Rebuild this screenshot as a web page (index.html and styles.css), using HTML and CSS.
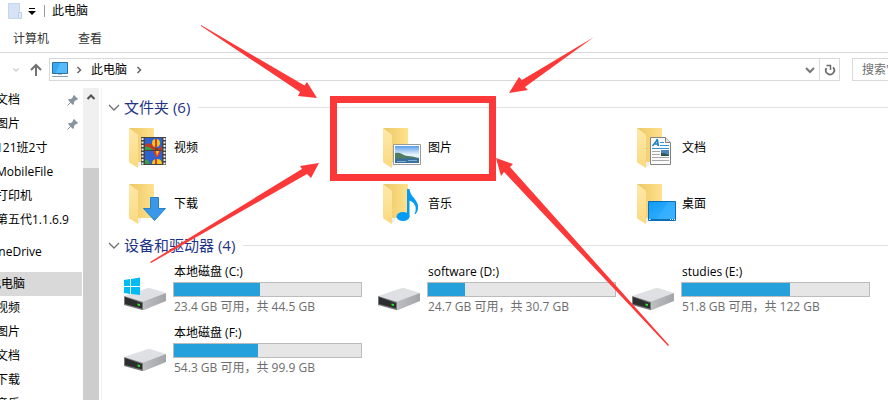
FILE: index.html
```html
<!DOCTYPE html>
<html lang="zh-CN">

<head>
    <meta charset="UTF-8">
    <meta name="viewport" content="width=device-width, initial-scale=1.0">
    <title>此电脑</title>
    <link rel="stylesheet" href="styles.css">
</head>

<body>
    <svg class="defs" aria-hidden="true">
        <defs>
            <linearGradient id="back" x1="0" y1="0" x2="1" y2="0">
                <stop offset="0" stop-color="#ecc766"/>
                <stop offset="1" stop-color="#ffe28c"/>
            </linearGradient>
            <linearGradient id="flap" x1="0" y1="0" x2="0" y2="1">
                <stop offset="0" stop-color="#ffe9a9"/>
                <stop offset="1" stop-color="#fad97f"/>
            </linearGradient>
            <linearGradient id="blue" x1="0" y1="0" x2="1" y2="1">
                <stop offset="0" stop-color="#0f9bfa"/>
                <stop offset="1" stop-color="#3fb4ff"/>
            </linearGradient>
            <linearGradient id="sky" x1="0" y1="0" x2="0" y2="1">
                <stop offset="0" stop-color="#5a9bea"/>
                <stop offset=".5" stop-color="#e6f3fc"/>
            </linearGradient>
            <linearGradient id="side" x1="0" y1="0" x2="1" y2="0">
                <stop offset="0" stop-color="#bfc0c3"/>
                <stop offset="1" stop-color="#a3a4a7"/>
            </linearGradient>
        </defs>
        <symbol id="folder" viewBox="0 0 40 42">
            <path d="M8 42l4-3V36H8z" fill="#eee"/>
            <path d="M0 2h25v34H6L0 32z" fill="url(#back)"/>
            <path d="M0 2l8 6q1 .5 1 2v32L1 37q-1-.6-1-2z" fill="url(#flap)"/>
        </symbol>
        <symbol id="drive" viewBox="0 0 42 33">
            <path d="M0 19l24-8q1-.3 2 0l16 5-23 10z" fill="#dfe0e4"/>
            <path d="M18 25l24-9v8L20 33h-2z" fill="url(#side)"/>
            <path d="M0 19l19 6v8h-1L0 28z" fill="#77797c"/>
            <path d="M1 20l17 6v5.500L1 27z" fill="#2b2d2f"/>
            <path d="M13.500 26.500l2.500.5v2l-2.500-.5z" fill="#2ee52e"/>
        </symbol>
        <symbol id="pin" viewBox="0 0 12 12">
            <path d="M7 1l4 4-1 1H9L7 8v2L6 11 1 6l1-1h2l2-2V2z" fill="#8795a1"/>
            <path d="M4 8l-3.500 3.500" stroke="#8795a1"/>
        </symbol>
        <symbol id="chevron" viewBox="0 0 12 12">
            <path d="M1 4l5 5 5-5" fill="none" stroke="#717171" stroke-width="1.300"/>
        </symbol>
    </svg>

    <header>
        <div class="titlebar">
            <svg class="doc" viewBox="0 0 14 18">
                <path d="M.5 1.500h11v15H.5z" fill="#d5e3f4" stroke="#c6d7ec"/>
                <path d="M10.500 10.500h3v6h-3z" fill="#e2ecf8" stroke="#bccfe8"/>
            </svg>
            <button class="quick" aria-label="自定义快速访问工具栏">
                <svg viewBox="0 0 8 8"><path d="M1 1.500h6" stroke="#000"/><path d="M0 4h8L4 8z"/></svg>
            </button>
            <span class="sep"></span>
            <span>此电脑</span>
        </div>
        <nav class="tabs">
            <a href="#">计算机</a>
            <a href="#">查看</a>
        </nav>
    </header>

    <div class="navbar">
        <button class="recent" aria-label="最近浏览的位置">
            <svg viewBox="0 0 8 8"><path d="M1.500 2.500L4 5l2.500-2.500" fill="none" stroke="#d0d0d0" stroke-width="1.500"/></svg>
        </button>
        <button class="up" aria-label="上移">
            <svg viewBox="0 0 12 14"><path d="M6 13V2M1 7l5-5 5 5" fill="none" stroke="#727272" stroke-width="2"/></svg>
        </button>
        <div class="address">
            <svg class="pc" viewBox="0 0 18 16">
                <path d="M1.500.5h15v11h-15z" fill="#35a9f5" stroke="#2c6f9e"/>
                <path d="M9 1h7v10H5z" fill="#55bbfb"/>
                <path d="M7 12h4v1H7z" fill="#b4c7d3"/>
                <path d="M1 14.500h16" stroke="#8aa2b3"/>
            </svg>
            <svg class="next" viewBox="0 0 8 8"><path d="M2.500 1L5.500 4l-3 3" fill="none" stroke="#666" stroke-width="1.500"/></svg>
            <button class="crumb">此电脑</button>
            <svg class="next" viewBox="0 0 8 8"><path d="M2.500 1L5.500 4l-3 3" fill="none" stroke="#666" stroke-width="1.500"/></svg>
            <button class="drop" aria-label="以前的位置">
                <svg viewBox="0 0 10 10"><path d="M1 3l4 4 4-4" fill="none" stroke="#777" stroke-width="2"/></svg>
            </button>
            <button class="refresh" aria-label="刷新">
                <svg viewBox="0 0 12 12">
                    <path d="M2.500 4a4.200 4.200 0 1 0 6.500-.7" fill="none" stroke="#6b6b6b" stroke-width="1.700"/>
                    <path d="M2.500 1.500H6.500V6" fill="none" stroke="#6b6b6b" stroke-width="1.500"/>
                </svg>
            </button>
        </div>
        <input class="search" type="text" placeholder="搜索&quot;此电脑&quot;" aria-label="搜索">
    </div>

    <div class="content">
        <aside>
            <ul class="tree">
                <li><a href="#">文档</a><svg class="pin"><use href="#pin"/></svg></li>
                <li><a href="#">图片</a><svg class="pin"><use href="#pin"/></svg></li>
                <li><a href="#">121班2寸</a></li>
                <li><a href="#">MobileFile</a></li>
                <li><a href="#">打印机</a></li>
                <li><a href="#">第五代1.1.6.9</a></li>
                <li class="root"><a href="#">OneDrive</a></li>
                <li class="root current"><a href="#">此电脑</a></li>
                <li><a href="#">视频</a></li>
                <li><a href="#">图片</a></li>
                <li><a href="#">文档</a></li>
                <li><a href="#">下载</a></li>
                <li><a href="#">音乐</a></li>
            </ul>
            <div class="scrollbar">
                <button aria-label="向上滚动">
                    <svg viewBox="0 0 10 10"><path d="M1.500 7L5 3.500 8.500 7" fill="none" stroke="#505050" stroke-width="2"/></svg>
                </button>
                <div class="thumb"></div>
            </div>
        </aside>

        <main>
            <h2><svg><use href="#chevron"/></svg>文件夹 (6)</h2>
            <div class="grid">
                <a class="folder" href="#">
                    <svg viewBox="0 0 40 42">
                        <use href="#folder"/>
                        <path d="M12 11h25v28H12z" fill="#444"/>
                        <path d="M13.500 12v27M35.500 12v27" stroke="#eee" stroke-width="2" stroke-dasharray="2 1.500"/>
                        <path d="M16 12h17v12H16zM16 25h17v13H16z" fill="#2f62d0"/>
                        <path d="M16 19q5-4 9 1t8 0v4H16z" fill="#c1382b"/>
                        <path d="M16 21q4-2 8 3h-8z" fill="#3a9c4a"/>
                        <circle cx="27" cy="17" r="4" fill="#f3c81f"/>
                        <path d="M26 13h2v8h-2z" fill="#d93b2a"/>
                        <path d="M26 22h3v2h-3z" fill="#77401c"/>
                        <path d="M24 25h8l-3 6h-2z" fill="#d93b2a"/>
                        <path d="M27 25h3l-2 5z" fill="#f3c81f"/>
                        <path d="M16 34q3-2 5 4h-5z" fill="#3a9c4a"/>
                        <path d="M23 38q0-5 5-5t5 5z" fill="#f3c81f"/>
                        <path d="M26 33h2v5h-2z" fill="#d93b2a"/>
                    </svg>
                    <span>视频</span>
                </a>
                <a class="folder" href="#">
                    <svg viewBox="0 0 40 42">
                        <use href="#folder"/>
                        <path d="M10.500 18.500h27v20h-27z" fill="#fff" stroke="#9a9a9a"/>
                        <path d="M12 20h24v17H12z" fill="url(#sky)"/>
                        <path d="M12 27q4-1 7 1t6 2 11 2v2H12z" fill="#4e7d62"/>
                        <path d="M12 33q10-1 24-.5V37H12z" fill="#396f9f"/>
                        <path d="M14 35.500h9M25 34.500h9" stroke="#82aecb"/>
                    </svg>
                    <span>图片</span>
                </a>
                <a class="folder" href="#">
                    <svg viewBox="0 0 40 42">
                        <use href="#folder"/>
                        <path d="M13.500 11.500h15l5 5v22h-20z" fill="#fbfbfb" stroke="#828282"/>
                        <path d="M28.500 11.500v5h5" fill="#e6e6e6" stroke="#828282"/>
                        <path d="M15.500 20l4.500-6 1 6M17.500 18h3M19 14h1.500l1 6" fill="none" stroke="#1b7fc4" stroke-width="1.300"/>
                        <path d="M23 16.500h4M23 19.500h9M15 22.500h17" stroke="#2f97d8"/>
                        <path d="M15 25.500h8M15 28.500h8M15 31.500h17M15 34.500h17" stroke="#a6a6a6"/>
                        <path d="M24 24h8v6h-8z" fill="#4f86ba"/>
                        <path d="M24 27q4 0 8 2v1h-8z" fill="#2b5648"/>
                    </svg>
                    <span>文档</span>
                </a>
                <a class="folder" href="#">
                    <svg viewBox="0 0 40 42">
                        <use href="#folder"/>
                        <path d="M21.500 15.500h8v11h7L25.500 38.500 14.500 26.500h7z" fill="#3a98e8" stroke="#2a7fc9"/>
                    </svg>
                    <span>下载</span>
                </a>
                <a class="folder" href="#">
                    <svg viewBox="0 0 40 42">
                        <use href="#folder"/>
                        <ellipse cx="20" cy="34.500" rx="6.500" ry="4.500" fill="#069bf5"/>
                        <path d="M24 7h2.500q.5 5 4.500 9 5 6 4 11-.5 3-2.500 5h-1q3-6-1-11-2-2-4-2.500V35H24z" fill="#069bf5"/>
                    </svg>
                    <span>音乐</span>
                </a>
                <a class="folder" href="#">
                    <svg viewBox="0 0 40 42">
                        <use href="#folder"/>
                        <path d="M11.500 19.500h27v19h-27z" fill="url(#blue)" stroke="#0c6eb8"/>
                        <path d="M31 20h7v17H20z" fill="#3cb2ff" opacity=".6"/>
                        <path d="M12 37.500h26" stroke="#0c6eb8"/>
                        <path d="M12 37.500h1.500M33 37.500h1M35 37.500h1M37 37.500h1" stroke="#fff"/>
                    </svg>
                    <span>桌面</span>
                </a>
            </div>

            <h2><svg><use href="#chevron"/></svg>设备和驱动器 (4)</h2>
            <div class="grid">
                <a class="drive" href="#">
                    <svg viewBox="0 0 42 33">
                        <use href="#drive"/>
                        <path d="M0 3l6-1v7H0zM7 2l9-1.500V9H7zM0 10h6v7l-6-1zM7 10h9v8l-9-1z" fill="#00bcf2"/>
                    </svg>
                    <div class="info">
                        <span>本地磁盘 (C:)</span>
                        <progress value="46" max="100"></progress>
                        <small>23.4 GB 可用，共 44.5 GB</small>
                    </div>
                </a>
                <a class="drive" href="#">
                    <svg viewBox="0 0 42 33"><use href="#drive"/></svg>
                    <div class="info">
                        <span>software (D:)</span>
                        <progress value="20" max="100"></progress>
                        <small>24.7 GB 可用，共 30.7 GB</small>
                    </div>
                </a>
                <a class="drive" href="#">
                    <svg viewBox="0 0 42 33"><use href="#drive"/></svg>
                    <div class="info">
                        <span>studies (E:)</span>
                        <progress value="58" max="100"></progress>
                        <small>51.8 GB 可用，共 122 GB</small>
                    </div>
                </a>
                <a class="drive" href="#">
                    <svg viewBox="0 0 42 33"><use href="#drive"/></svg>
                    <div class="info">
                        <span>本地磁盘 (F:)</span>
                        <progress value="45" max="100"></progress>
                        <small>54.3 GB 可用，共 99.9 GB</small>
                    </div>
                </a>
            </div>
        </main>
    </div>

    <!-- red frame and arrows over the pictures folder -->
    <svg class="marks" viewBox="0 0 888 400" aria-hidden="true">
        <rect x="333.500" y="99.500" width="159" height="78" fill="none" stroke="#fc3838" stroke-width="7"/>
        <path d="M201 25L304.500 85.500 307 82 317 98 298 96 300 92 201 26z"/>
        <path d="M594 37L525 87 528 90 509 93 519 77 522 80z"/>
        <path d="M150 262L302 169 300 166 319 163 311 178 307 174 151 263z"/>
        <path d="M669 345L510 167 513 164 496 158 501 176 504 172 668 346z"/>
    </svg>
</body>

</html>
```
FILE: styles.css
```css
* {
    box-sizing: border-box;
    margin: 0;
    padding: 0;
}
body {
    position: relative;
    display: flex;
    flex-direction: column;
    height: 100vh;
    overflow: hidden;
    background-color: #fff;
    color: #000;
    font: 12px/16px "Open Sans", "Noto Sans CJK SC", sans-serif;
}
a {
    color: inherit;
    text-decoration: none;
}
button {
    display: flex;
    align-items: center;
    justify-content: center;
    border: none;
    background: none;
    color: inherit;
    font: inherit;
}
svg {
    flex: none;
}
.defs {
    position: absolute;
    width: 0;
    height: 0;
}

/* title and tabs */
.titlebar {
    display: flex;
    align-items: center;
    height: 22px;
    padding-left: 8px;
}
.doc {
    width: 14px;
    height: 18px;
}
.quick {
    width: 20px;
    height: 20px;
}
.quick svg {
    width: 8px;
    height: 8px;
}
.sep {
    width: 1px;
    height: 12px;
    margin: 0 7px 0 2px;
    background-color: #999;
}
.tabs {
    display: flex;
    align-items: center;
    gap: 29px;
    height: 31px;
    padding: 3px 0 0 13px;
    border-bottom: 1px solid #d9d9d9;
    color: #333;
}

/* address row */
.navbar {
    display: flex;
    flex: none;
    height: 35px;
    padding: 5px 0 7px 8px;
}
.recent {
    width: 15px;
}
.recent svg,
.next {
    width: 8px;
    height: 8px;
}
.up {
    width: 26px;
}
.up svg {
    width: 12px;
    height: 14px;
}
.address {
    display: flex;
    flex: 1;
    align-items: center;
    border: 1px solid #d9d9d9;
}
.pc {
    width: 18px;
    height: 16px;
    margin: 0 6px 0 1px;
}
.crumb {
    padding: 0 8px;
}
.drop {
    width: 18px;
    height: 20px;
    margin-left: auto;
}
.drop svg {
    width: 10px;
    height: 10px;
}
.refresh {
    width: 20px;
    align-self: stretch;
    border-left: 1px solid #d9d9d9;
}
.refresh svg {
    width: 12px;
    height: 12px;
}
.search {
    width: 36px;
    margin-left: 12px;
    padding-left: 9px;
    border: 1px solid #d9d9d9;
    border-right: none;
    font: inherit;
}
.search::placeholder {
    color: #6d6d6d;
}

/* left tree */
.content {
    display: flex;
    flex: 1;
    min-height: 0;
}
aside {
    display: flex;
    flex: none;
    width: 102px;
    overflow: hidden;
    border-right: 1px solid #f0f0f0;
}
.tree {
    width: 82px;
    list-style: none;
}
.tree li {
    display: flex;
    align-items: center;
    justify-content: space-between;
    height: 24px;
    padding-right: 3px;
    white-space: nowrap;
}
.tree a {
    margin-left: -4px;
}
.tree .root {
    margin-top: 8px;
}
.tree .root a {
    margin-left: -11px;
}
.tree .current {
    background-color: #d9d9d9;
}
.pin {
    width: 12px;
    height: 12px;
}
.scrollbar {
    display: flex;
    flex-direction: column;
    width: 16px;
    margin-left: 1px;
    background-color: #f0f0f0;
}
.scrollbar button {
    height: 18px;
}
.scrollbar svg {
    width: 10px;
    height: 10px;
}
.thumb {
    flex: 1;
    margin-top: 62px;
    background-color: #cdcdcd;
}

/* folders and drives */
main {
    flex: 1;
    padding: 7px 0 0 22px;
}
h2 {
    display: flex;
    align-items: center;
    height: 24px;
    margin-left: -16px;
    color: #1e3287;
    font-size: 15px;
    font-weight: normal;
}
h2 svg {
    width: 12px;
    height: 12px;
    margin-right: 4px;
}
h2::after {
    content: "";
    flex: 1;
    height: 1px;
    margin-left: 8px;
    background-color: #e2e2e2;
}
.grid {
    display: grid;
    grid-template-columns: repeat(auto-fill, 254px);
    margin-bottom: 2px;
}
.folder {
    display: flex;
    align-items: center;
    gap: 5px;
    height: 56px;
    padding-left: 5px;
}
.folder svg {
    width: 40px;
    height: 42px;
}
.folder span {
    padding-top: 2px;
}
.drive {
    display: flex;
    align-items: flex-end;
    gap: 7px;
    height: 61px;
    padding-right: 16px;
}
.drive svg {
    width: 42px;
    height: 33px;
    margin-bottom: 8px;
}
.info {
    display: flex;
    flex: 1;
    flex-direction: column;
    gap: 2px;
    padding-bottom: 3px;
}
.info span,
.info small {
    padding-left: 1px;
    font-size: 12px;
}
.info small {
    color: #6d6d6d;
}
progress {
    appearance: none;
    width: 100%;
    height: 15px;
    border: 1px solid #bcbcbc;
    background-color: #e6e6e6;
}
progress::-webkit-progress-bar {
    background-color: #e6e6e6;
}
progress::-webkit-progress-value {
    background-color: #26a0da;
}

.marks {
    position: absolute;
    top: 0;
    left: 0;
    width: 888px;
    height: 400px;
    fill: #fc3838;
    pointer-events: none;
}
```
